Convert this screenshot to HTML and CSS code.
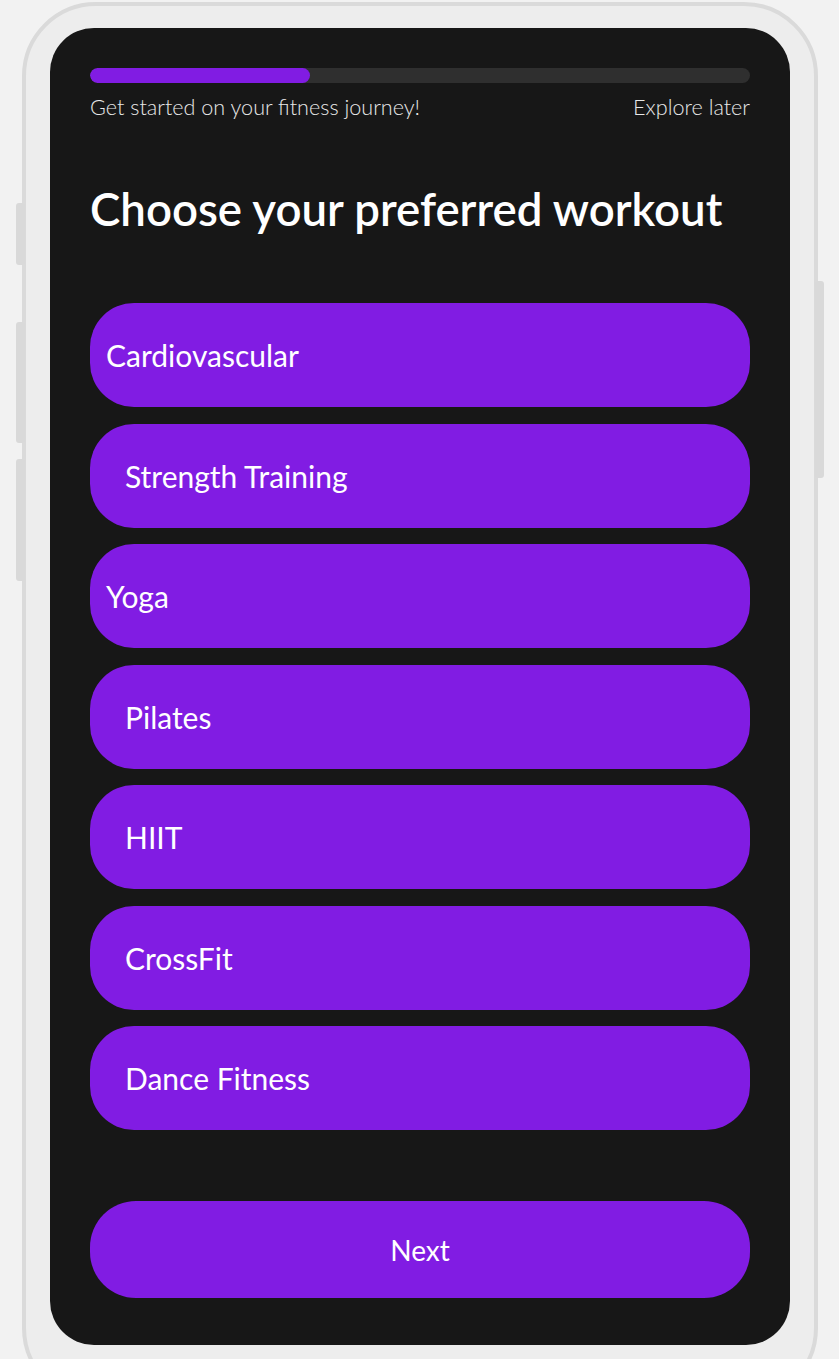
FILE: index.html
```html
<!DOCTYPE html>
<html>
<head>
<meta charset="utf-8">
<link rel="stylesheet" href="styles.css">
</head>
<body>
<div class="frame">
  <span class="side side-l1"></span>
  <span class="side side-l2"></span>
  <span class="side side-l3"></span>
  <span class="side side-r1"></span>
  <div class="screen">
    <div class="progress"><div class="progress-fill" style="width:33.3%"></div></div>
    <div class="labels">
      <span>Get started on your fitness journey!</span>
      <span>Explore later</span>
    </div>
    <h1 class="title">Choose your preferred workout</h1>
    <div class="options">
      <div class="option tight">Cardiovascular</div>
      <div class="option">Strength Training</div>
      <div class="option tight">Yoga</div>
      <div class="option">Pilates</div>
      <div class="option">HIIT</div>
      <div class="option">CrossFit</div>
      <div class="option">Dance Fitness</div>
    </div>
    <div class="next">Next</div>
  </div>
</div>
</body>
</html>
```

FILE: styles.css
```css
html, body {
  margin: 0;
  padding: 0;
  background: #f2f2f2;
  overflow: hidden;
  height: 1359px;
}
body {
  font-family: "Lato", "Liberation Sans", sans-serif;
}
.frame {
  position: relative;
  box-sizing: border-box;
  width: 796px;
  height: 1400px;
  margin: 2px 0 0 22px;
  padding: 22px 24px;
  border: 4px solid #dadada;
  border-radius: 74px;
  background: #ededed;
}
.side {
  position: absolute;
  width: 9px;
  background: #d9d9d9;
  border-radius: 3px;
}
.side-l1 { left: -10px; top: 197px; height: 62px; }
.side-l2 { left: -10px; top: 316px; height: 121px; }
.side-l3 { left: -10px; top: 453px; height: 122px; }
.side-r1 { right: -10px; top: 275px; height: 197px; }
.screen {
  box-sizing: border-box;
  height: 1317px;
  background: #171717;
  border-radius: 44px;
  padding: 40px 40px 0;
  color: #fff;
}
.progress {
  height: 15px;
  border-radius: 8px;
  background: #2f2f2f;
  overflow: hidden;
}
.progress-fill {
  height: 100%;
  background: #811ce3;
  border-radius: 8px;
}
.labels {
  display: flex;
  justify-content: space-between;
  margin-top: 12px;
  font-size: 21.6px;
  font-weight: 300;
  color: #e8e8e8;
  line-height: 24px;
}
.title {
  margin: 62px 0 0;
  font-size: 45.6px;
  font-weight: 600;
  line-height: 56px;
  color: #fff;
}
.options {
  display: flex;
  flex-direction: column;
  gap: 16.5px;
  margin-top: 66px;
}
.option {
  box-sizing: border-box;
  height: 104px;
  display: flex;
  align-items: center;
  padding-left: 35px;
  background: #811ce3;
  border-radius: 44px;
  font-size: 30px;
  color: #fff;
}
.option.tight {
  padding-left: 16px;
}
.next {
  display: flex;
  align-items: center;
  justify-content: center;
  height: 97px;
  margin-top: 71px;
  background: #811ce3;
  border-radius: 46px;
  font-size: 28px;
  color: #fff;
}
```
